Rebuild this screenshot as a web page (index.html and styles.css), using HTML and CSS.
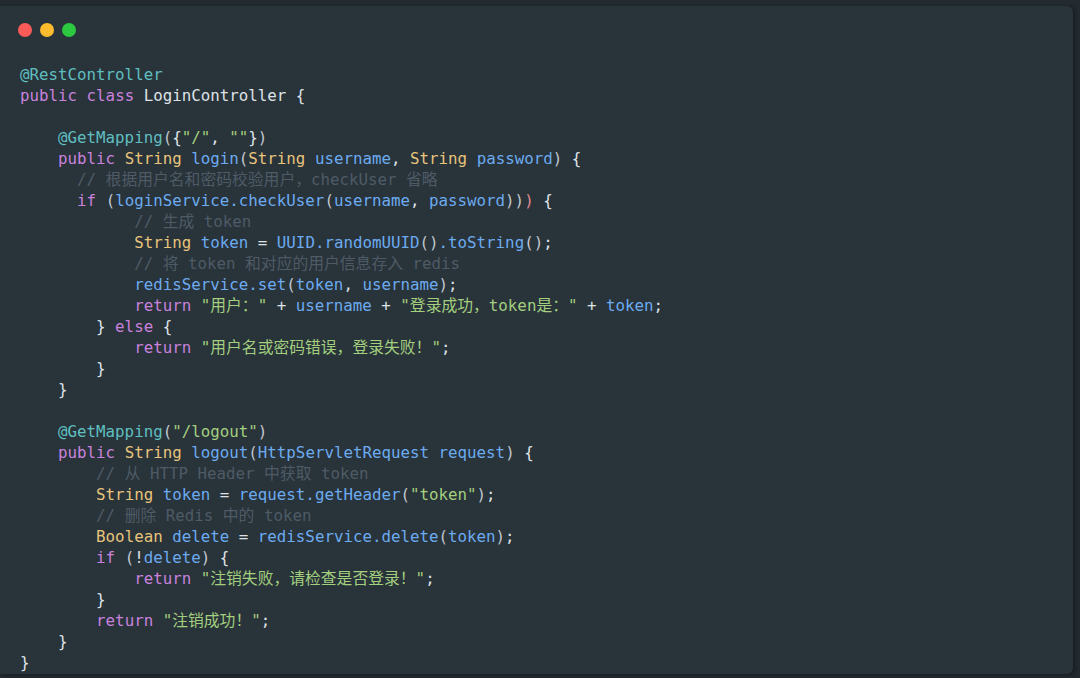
FILE: index.html
```html
<!DOCTYPE html>
<html lang="zh">
<head>
    <meta charset="UTF-8">
    <meta name="viewport" content="width=device-width, initial-scale=1.0">
    <title>LoginController</title>
    <link rel="stylesheet" href="styles.css">
</head>
<body>
    <div class="window">
        <div class="dots">
            <span class="dot red"></span>
            <span class="dot yellow"></span>
            <span class="dot green"></span>
        </div>
        <div class="code">
            <div class="line"><span class="a">@RestController</span></div>
            <div class="line"><span class="k">public</span> <span class="k">class</span> LoginController {</div>
            <div class="line"></div>
            <div class="line">    <span class="a">@GetMapping</span><span class="p">(</span>{<span class="s">"/"</span>, <span class="s">""</span>}<span class="p">)</span></div>
            <div class="line">    <span class="k">public</span> <span class="t">String</span> <span class="f">login</span><span class="p">(</span><span class="t">String</span> <span class="f">username</span>, <span class="t">String</span> <span class="f">password</span><span class="p">)</span> {</div>
            <div class="line">      <span class="c">// 根据用户名和密码校验用户，checkUser 省略</span></div>
            <div class="line">      <span class="k">if</span> <span class="p">(</span><span class="f">loginService.checkUser</span><span class="p">(</span><span class="f">username</span>, <span class="f">password</span><span class="p">))</span><span class="r">)</span> {</div>
            <div class="line">            <span class="c">// 生成 token</span></div>
            <div class="line">            <span class="t">String</span> <span class="f">token</span> = <span class="f">UUID.randomUUID</span><span class="p">()</span><span class="f">.toString</span><span class="p">()</span>;</div>
            <div class="line">            <span class="c">// 将 token 和对应的用户信息存入 redis</span></div>
            <div class="line">            <span class="f">redisService.set</span><span class="p">(</span><span class="f">token</span>, <span class="f">username</span><span class="p">)</span>;</div>
            <div class="line">            <span class="k">return</span> <span class="s">"用户："</span> + <span class="f">username</span> + <span class="s">"登录成功，token是："</span> + <span class="f">token</span>;</div>
            <div class="line">        } <span class="k">else</span> {</div>
            <div class="line">            <span class="k">return</span> <span class="s">"用户名或密码错误，登录失败！"</span>;</div>
            <div class="line">        }</div>
            <div class="line">    }</div>
            <div class="line"></div>
            <div class="line">    <span class="a">@GetMapping</span><span class="p">(</span><span class="s">"/logout"</span><span class="p">)</span></div>
            <div class="line">    <span class="k">public</span> <span class="t">String</span> <span class="f">logout</span><span class="p">(</span><span class="f">HttpServletRequest</span> <span class="f">request</span><span class="p">)</span> {</div>
            <div class="line">        <span class="c">// 从 HTTP Header 中获取 token</span></div>
            <div class="line">        <span class="t">String</span> <span class="f">token</span> = <span class="f">request.getHeader</span><span class="p">(</span><span class="s">"token"</span><span class="p">)</span>;</div>
            <div class="line">        <span class="c">// 删除 Redis 中的 token</span></div>
            <div class="line">        <span class="t">Boolean</span> <span class="f">delete</span> = <span class="f">redisService.delete</span><span class="p">(</span><span class="f">token</span><span class="p">)</span>;</div>
            <div class="line">        <span class="k">if</span> <span class="p">(</span>!<span class="f">delete</span><span class="p">)</span> {</div>
            <div class="line">            <span class="k">return</span> <span class="s">"注销失败，请检查是否登录！"</span>;</div>
            <div class="line">        }</div>
            <div class="line">        <span class="k">return</span> <span class="s">"注销成功！"</span>;</div>
            <div class="line">    }</div>
            <div class="line">}</div>
        </div>
    </div>
</body>
</html>
```

FILE: styles.css
```css
body {
    margin: 0;
    height: 678px;
    background-color: #232b30;
    overflow: hidden;
}
.window {
    margin: 6px 7px 0 0;
    height: 668px;
    box-sizing: border-box;
    background-color: #29333a;
    border-radius: 0 6px 6px 0;
    box-shadow: 2px 1px 4px rgba(0, 0, 0, 0.35);
    padding: 17px 0 0 18px;
}
.dots {
    display: flex;
    gap: 8px;
    height: 14px;
}
.dot {
    width: 14px;
    height: 14px;
    border-radius: 50%;
}
.red { background-color: #fc5b57; }
.yellow { background-color: #fdbc2e; }
.green { background-color: #2bc840; }
.code {
    margin-top: 27px;
    padding-left: 2px;
    font-family: "DejaVu Sans Mono", "Noto Sans CJK SC", monospace;
    font-size: 15.8px;
    color: #dfe3e8;
}
.line {
    height: 21px;
    line-height: 21px;
    white-space: pre;
}
.a { color: #5fbfc0; }
.k { color: #c882dd; }
.t { color: #e8c47c; }
.f { color: #6cabf0; }
.s { color: #a3cf7f; }
.c { color: #4e5b66; }
.p { color: #c1c7cf; }
.r { color: #e08a8f; }
```
